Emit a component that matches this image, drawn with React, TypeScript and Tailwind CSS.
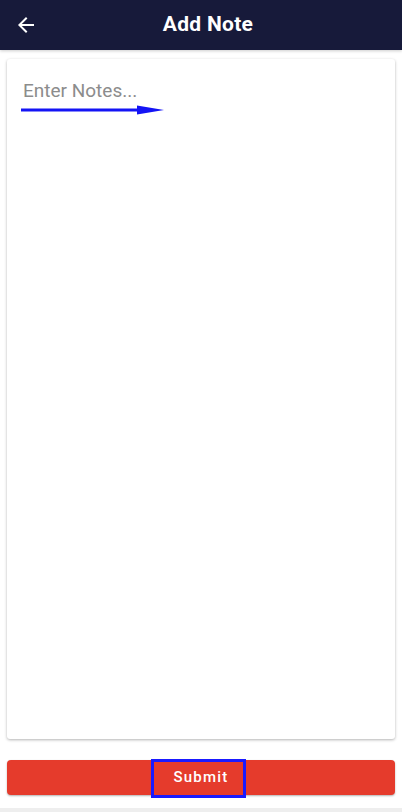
import React from 'react';

function BackIcon() {
  return (
    <svg viewBox="0 0 24 24" className="h-6 w-6" fill="currentColor">
      <path d="M20 11H7.83l5.59-5.59L12 4l-8 8 8 8 1.41-1.41L7.83 13H20v-2z" />
    </svg>
  );
}

export default function App() {
  return (
    <div className="flex min-h-[812px] flex-col bg-white font-['Roboto',sans-serif]">
      <header className="flex h-[50px] items-center bg-[#171a3a] pl-[14px] pr-6 text-white shadow-[0_1px_3px_rgba(0,0,0,0.2)]">
        <button className="flex h-6 w-6 items-center justify-center">
          <BackIcon />
        </button>
        <h1 className="flex-1 text-center text-[21px] font-bold tracking-[0.3px]">Add Note</h1>
      </header>

      <main className="flex flex-1 flex-col px-[7px] pt-[9px]">
        <div className="relative h-[680px] rounded-[3px] bg-white shadow-[0_1px_3px_rgba(0,0,0,0.3)]">
          <textarea
            placeholder="Enter Notes..."
            className="h-full w-full resize-none bg-transparent px-4 pt-[18px] text-[19px] text-gray-800 outline-none placeholder:text-[#8c8c8c]"
          />
          {/* annotation arrow */}
          <svg
            className="pointer-events-none absolute left-[14px] top-[45px]"
            width="146"
            height="12"
            viewBox="0 0 146 12"
          >
            <line x1="0" y1="6" x2="120" y2="6" stroke="#1414f5" strokeWidth="3" strokeLinecap="round" />
            <polygon points="116,1.5 143,6 116,10.5" fill="#1414f5" />
          </svg>
        </div>

        <div className="relative mt-[21px]">
          <button className="h-[35px] w-full rounded-[4px] bg-[#e53b2c] text-[15px] font-medium tracking-[1.2px] text-white shadow-[0_1px_2px_rgba(0,0,0,0.3)]">
            Submit
          </button>
          <div className="pointer-events-none absolute left-[144px] top-[-1px] h-[39px] w-[95px] border-[3px] border-[#1a1aff]" />
        </div>
      </main>

      <div className="h-[4px] bg-[#eeeeee]" />
    </div>
  );
}
